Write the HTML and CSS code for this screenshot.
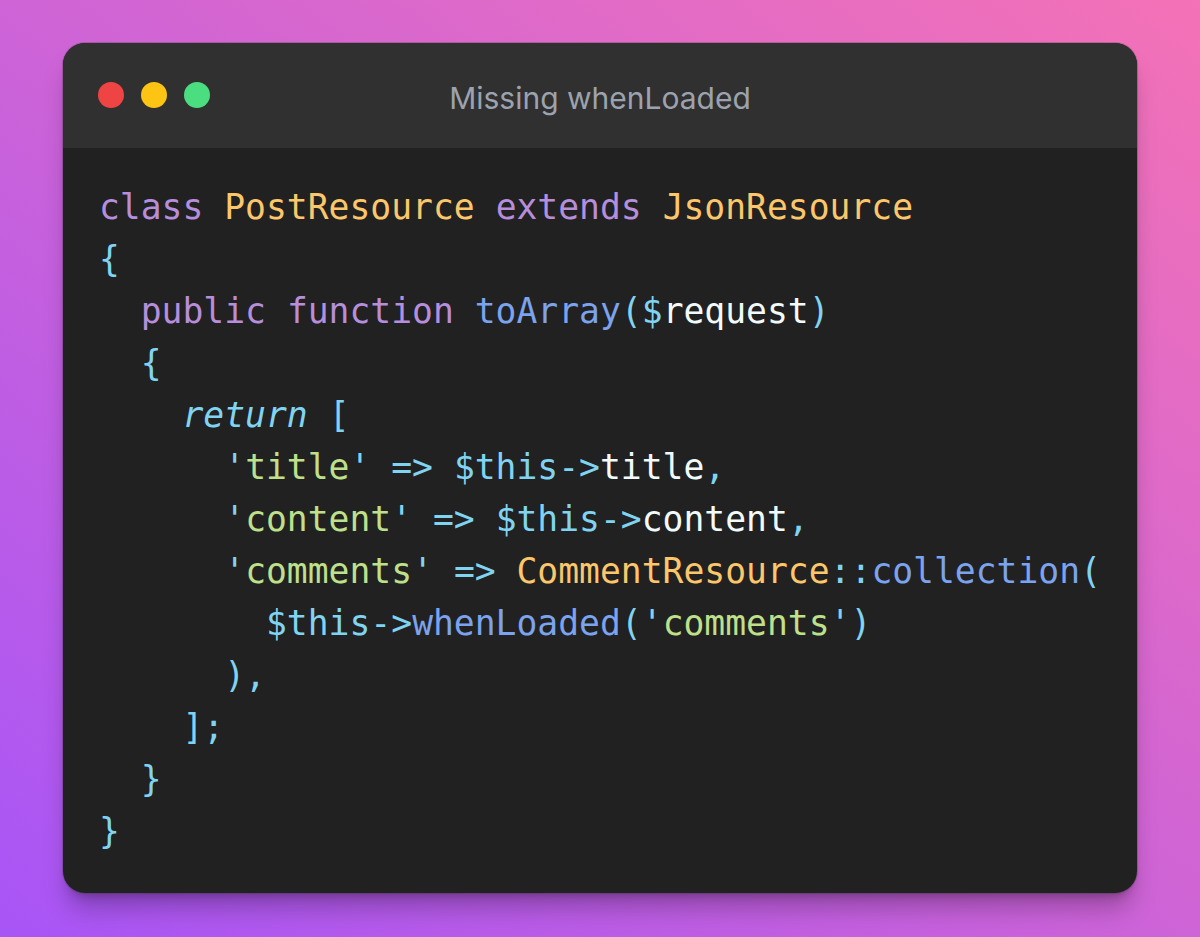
FILE: index.html
```html
<!DOCTYPE html>
<html lang="en">
<head>
<meta charset="utf-8">
<title>Missing whenLoaded</title>
<link rel="stylesheet" href="styles.css">
</head>
<body>
<main class="window">
  <header class="titlebar">
    <div class="dots"><span class="dot red"></span><span class="dot yellow"></span><span class="dot green"></span></div>
    <h1 class="title">Missing whenLoaded</h1>
  </header>
<pre class="code"><span class="kw">class</span> <span class="cls">PostResource</span> <span class="kw">extends</span> <span class="cls">JsonResource</span>
<span class="op">{</span>
  <span class="kw">public</span> <span class="kw">function</span> <span class="fn">toArray</span><span class="op">($</span><span class="var">request</span><span class="op">)</span>
  <span class="op">{</span>
    <span class="op ret">return</span> <span class="op">[</span>
      <span class="op">'</span><span class="str">title</span><span class="op">'</span> <span class="op">=&gt;</span> <span class="op">$this-&gt;</span><span class="var">title</span><span class="op">,</span>
      <span class="op">'</span><span class="str">content</span><span class="op">'</span> <span class="op">=&gt;</span> <span class="op">$this-&gt;</span><span class="var">content</span><span class="op">,</span>
      <span class="op">'</span><span class="str">comments</span><span class="op">'</span> <span class="op">=&gt;</span> <span class="cls">CommentResource</span><span class="op">::</span><span class="fn">collection</span><span class="op">(</span>
        <span class="op">$this-&gt;</span><span class="fn">whenLoaded</span><span class="op">('</span><span class="str">comments</span><span class="op">')</span>
      <span class="op">),</span>
    <span class="op">];</span>
  <span class="op">}</span>
<span class="op">}</span></pre>
</main>
</body>
</html>
```
FILE: styles.css
```css
html, body {
  margin: 0;
  height: 100%;
}
body {
  width: 1200px;
  height: 937px;
  overflow: hidden;
  box-sizing: border-box;
  padding: 43px 63px 44px;
  background: linear-gradient(to top right, #a855f7, #f472b6);
}
.window {
  height: 850px;
  border-radius: 22px;
  overflow: hidden;
  background: #212121;
  box-shadow: 0 0 0 1px rgba(70,60,70,.3), 0 20px 25px -5px rgba(0,0,0,.25), 0 8px 10px -6px rgba(0,0,0,.25);
}
.titlebar {
  height: 105px;
  background: #303030;
  display: flex;
  align-items: center;
  justify-content: center;
  position: relative;
}
.dots {
  position: absolute;
  left: 34.7px;
  top: 39px;
  display: flex;
  gap: 17.3px;
}
.dot {
  width: 26px;
  height: 26px;
  border-radius: 50%;
}
.red { background: #ef4444; }
.yellow { background: #fdc414; }
.green { background: #4ade80; }
.title {
  margin: 4px 0 0;
  font: 400 30px/40px Inter, "Liberation Sans", sans-serif;
  color: #9ca3af;
}
.code {
  margin: 0;
  padding: 33px 36px;
  font: 34.68px/52px "DejaVu Sans Mono", monospace;
  color: #80d4f2;
}
.kw { color: #b68edb; }
.cls { color: #fcc76a; }
.fn { color: #7ba3ee; }
.str { color: #bfe08a; }
.var { color: #f2fbfb; }
.op { color: #80d4f2; }
.ret { font-style: italic; }
```
